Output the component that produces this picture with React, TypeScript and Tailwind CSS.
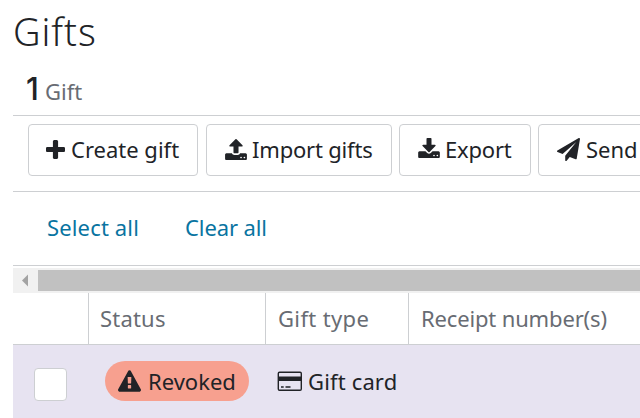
import type { ReactNode } from 'react';

const icons = {
  plus: 'M1600 736v192q0 40-28 68t-68 28h-416v416q0 40-28 68t-68 28h-192q-40 0-68-28t-28-68v-416h-416q-40 0-68-28t-28-68v-192q0-40 28-68t68-28h416v-416q0-40 28-68t68-28h192q40 0 68 28t28 68v416h416q40 0 68 28t28 68z',
  upload:
    'M1344 1472q0-26-19-45t-45-19-45 19-19 45 19 45 45 19 45-19 19-45zm256 0q0-26-19-45t-45-19-45 19-19 45 19 45 45 19 45-19 19-45zm128-224v320q0 40-28 68t-68 28h-1472q-40 0-68-28t-28-68v-320q0-40 28-68t68-28h427q21 56 70.5 92t110.5 36h256q61 0 110.5-36t70.5-92h427q40 0 68 28t28 68zm-325-648q-17 40-59 40h-256v448q0 26-19 45t-45 19h-256q-26 0-45-19t-19-45v-448h-256q-42 0-59-40-17-39 14-69l448-448q18-19 45-19t45 19l448 448q31 30 14 69z',
  download:
    'M1344 1344q0-26-19-45t-45-19-45 19-19 45 19 45 45 19 45-19 19-45zm256 0q0-26-19-45t-45-19-45 19-19 45 19 45 45 19 45-19 19-45zm128-224v320q0 40-28 68t-68 28h-1472q-40 0-68-28t-28-68v-320q0-40 28-68t68-28h465l135 136q58 56 136 56t136-56l136-136h464q40 0 68 28t28 68zm-325-569q17 41-14 70l-448 448q-18 19-45 19t-45-19l-448-448q-31-29-14-70 17-39 59-39h256v-448q0-26 19-45t45-19h256q26 0 45 19t19 45v448h256q42 0 59 39z',
  plane:
    'M1764 11q33 24 27 64l-256 1536q-5 29-32 45-14 8-31 8-11 0-24-5l-453-185-242 295q-18 23-49 23-13 0-22-4-19-7-30.5-23.5t-11.5-36.5v-349l864-1059-1069 925-395-162q-37-14-40-55-2-40 32-59l1664-960q15-9 32-9 20 0 36 11z',
  warning:
    'M1024 1375v-190q0-14-9.5-23.5t-22.5-9.5h-192q-13 0-22.5 9.5t-9.5 23.5v190q0 14 9.5 23.5t22.5 9.5h192q13 0 22.5-9.5t9.5-23.5zm-2-374l18-459q0-12-10-19-13-11-24-11h-220q-11 0-24 11-10 7-10 21l17 457q0 10 10 16.5t24 6.5h185q14 0 23.5-6.5t10.5-16.5zm-14-934l768 1408q35 63-2 126-17 29-46.5 46t-63.5 17h-1536q-34 0-63.5-17t-46.5-46q-37-63-2-126l768-1408q17-31 47-49t65-18 65 18 47 49z',
};

function Icon({ path, viewBox, className }: { path: string; viewBox: string; className: string }) {
  return (
    <svg viewBox={viewBox} className={`shrink-0 fill-current ${className}`} aria-hidden="true">
      <path d={path} />
    </svg>
  );
}

function CardIcon() {
  return (
    <svg viewBox="0 0 25 20" className="h-5 w-[25px] shrink-0" aria-hidden="true">
      <rect x="1.3" y="1.3" width="23" height="18" rx="1.2" fill="none" stroke="#212327" strokeWidth="1.4" />
      <path d="M1 5.5h23.5v4.5H1z" fill="#212327" />
      <path d="M4 16h2.7M8.5 16h5" stroke="#212327" strokeWidth="1.3" />
    </svg>
  );
}

function ToolbarButton({ className, children }: { className: string; children: ReactNode }) {
  return (
    <button
      type="button"
      className={`flex h-[52px] shrink-0 items-center rounded-[4px] border border-[#cdcfd2] bg-white pb-[2px] whitespace-nowrap ${className}`}
    >
      {children}
    </button>
  );
}

export default function App() {
  return (
    <div className="h-[418px] w-[640px] overflow-hidden bg-white pl-[13px] font-['Noto_Sans','Open_Sans',sans-serif] text-[22px] leading-[30px] text-[#212327]">
      <h1 className="h-[66px] pt-[6px] text-[38px] leading-[50px] font-light tracking-[1px]">Gifts</h1>

      {/* Record count */}
      <div className="flex h-[49px] items-baseline pl-[13px]">
        <span className="w-[19px] font-['Inter',sans-serif] text-[31px] leading-[46px] font-medium">1</span>
        <span className="text-[#686c73]">Gift</span>
      </div>

      {/* Actions */}
      <div className="flex h-[77px] items-start border-y border-[#cdcfd2] pt-2 pl-[15px]">
        <ToolbarButton className="mr-2 w-[170px] gap-[6px] pl-[17px]">
          <Icon path={icons.plus} viewBox="192 128 1408 1408" className="h-[19px] w-[19px]" />
          <span>Create gift</span>
        </ToolbarButton>
        <ToolbarButton className="mr-[7px] w-[186px] gap-[5px] pl-[18px]">
          <Icon path={icons.upload} viewBox="64 64 1664 1600" className="h-[21px] w-[22px]" />
          <span className="tracking-[-0.2px]">Import gifts</span>
        </ToolbarButton>
        <ToolbarButton className="mr-[7px] w-[132px] gap-[5px] pl-[18px]">
          <Icon path={icons.download} viewBox="64 0 1664 1536" className="h-5 w-[22px] -translate-y-px" />
          <span className="tracking-[-0.2px]">Export</span>
        </ToolbarButton>
        <ToolbarButton className="w-[140px] gap-[6px] pl-[18px]">
          <Icon path={icons.plane} viewBox="0 0 1792 1792" className="h-[23px] w-[23px]" />
          <span>Send</span>
        </ToolbarButton>
      </div>

      {/* Row selection */}
      <div className="flex h-[74px] items-center gap-[46px] border-b border-[#cdcfd2] pb-[3px] pl-[34px] text-[#0974a1]">
        <button type="button" className="tracking-[0.15px]">
          Select all
        </button>
        <button type="button" className="tracking-[-0.1px]">
          Clear all
        </button>
      </div>

      {/* Horizontal scrollbar */}
      <div className="mt-[2px] flex h-[25px] items-center bg-[#f1f1f1]">
        <svg viewBox="0 0 25 25" className="h-[25px] w-[25px] shrink-0 fill-[#a3a3a3]" aria-hidden="true">
          <path d="M15 6.5v12L9 12.5z" />
        </svg>
        <div className="h-[21px] grow bg-[#c1c1c1]" />
      </div>

      <div className="grid h-[52px] grid-cols-[75px_177px_143px_1fr] border-b border-[#cdcfd2] leading-[51px] text-[#686c73]">
        <div />
        <div className="border-l border-[#cdcfd2] pl-[11px] tracking-[0.2px]">Status</div>
        <div className="border-l border-[#cdcfd2] pl-3 tracking-[0.35px]">Gift type</div>
        <div className="border-l border-[#cdcfd2] pl-3 tracking-[-0.15px]">Receipt number(s)</div>
      </div>

      <div className="grid h-[73px] grid-cols-[75px_177px_143px_1fr] items-start bg-[#e7e3f1]">
        <div className="mt-[23px] ml-[21px] h-[33px] w-[33px] rounded-[4px] border border-[#cdcfd2] bg-white" />
        <div className="mt-4 ml-[17px] flex h-10 w-[144px] items-center gap-[7px] rounded-full bg-[#f7a08f] pl-[13px]">
          <Icon path={icons.warning} viewBox="0 0 1792 1664" className="h-[22px] w-[23px]" />
          <span>Revoked</span>
        </div>
        <div className="mt-4 ml-3 flex h-10 items-center gap-[6px] pb-px whitespace-nowrap">
          <CardIcon />
          <span className="tracking-[0.15px]">Gift card</span>
        </div>
      </div>
    </div>
  );
}
